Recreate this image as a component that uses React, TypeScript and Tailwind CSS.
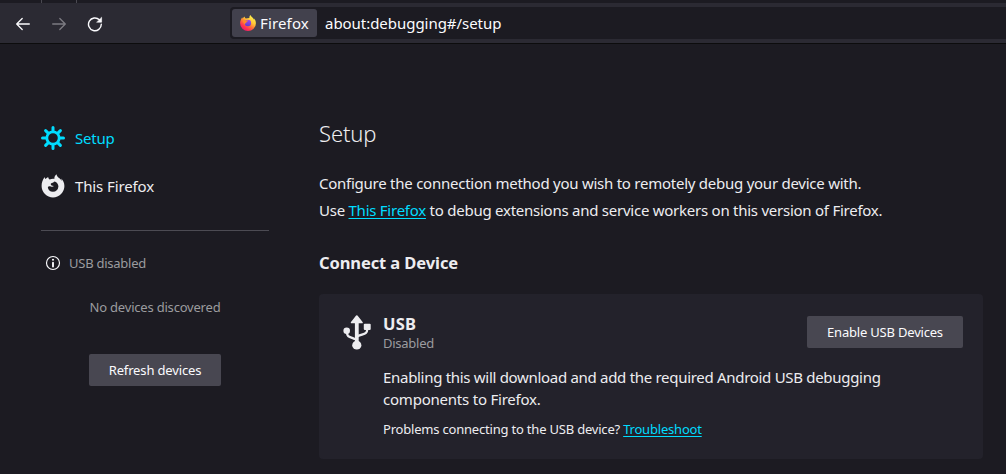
import React from "react";

const BackIcon = () => (
  <svg width="16" height="16" viewBox="0 0 16 16" fill="none" stroke="#fbfbfe" strokeWidth="1.3" strokeLinecap="round" strokeLinejoin="round">
    <path d="M14.3 8H1.8M7.2 2.5 1.7 8l5.5 5.5" />
  </svg>
);

const ForwardIcon = () => (
  <svg width="16" height="16" viewBox="0 0 16 16" fill="none" stroke="#7c7b82" strokeWidth="1.3" strokeLinecap="round" strokeLinejoin="round">
    <path d="M1.7 8h12.5M8.8 2.5 14.3 8l-5.5 5.5" />
  </svg>
);

const ReloadIcon = () => (
  <svg width="16" height="16" viewBox="0 0 16 16" fill="none" stroke="#fbfbfe" strokeWidth="1.4" strokeLinecap="round">
    <path d="M14.3 8.3A6.4 6.4 0 1 1 12.4 3.8" />
    <path d="M14.6 1.6v4.6H10z" fill="#fbfbfe" strokeWidth=".6" strokeLinejoin="round" />
  </svg>
);

const FirefoxLogo = () => (
  <svg width="16" height="16" viewBox="0 0 16 16">
    <defs>
      <linearGradient id="flame" x1="0.85" y1="0.1" x2="0.25" y2="0.95">
        <stop offset="0" stopColor="#fff44f" />
        <stop offset="0.35" stopColor="#ffc636" />
        <stop offset="0.6" stopColor="#ff7139" />
        <stop offset="0.8" stopColor="#ff3750" />
        <stop offset="1" stopColor="#f5156c" />
      </linearGradient>
      <linearGradient id="globe" x1="0.6" y1="0" x2="0.4" y2="1">
        <stop offset="0" stopColor="#a347ec" />
        <stop offset="1" stopColor="#5b3fd0" />
      </linearGradient>
    </defs>
    <path fill="url(#flame)" d="M10.400.1c-.9.8-1.100 2-1 2.900L5.800 3.400C4.900 3 4.600 2.300 4.700 1.600c-1 .5-1.600 1.200-2 1.900-.4-.2-.5-.8-.5-1.200C.9 4.200.1 6.200.1 8.300A7.900 7.700 0 0 0 8 16a7.900 7.700 0 0 0 7.900-7.700c0-2.200-.8-4-2-4.900.2.500.3 1 .3 1.500C13.400 2.700 11 2.200 10.400.1z" />
    <circle cx="7.900" cy="8" r="3.200" fill="url(#globe)" />
    <path fill="#ff8a2b" d="M2.500 5.200c1.400-.8 2.700-.5 3.600.2l2.100.2c-.1.700-.8 1-1.600 1.400-.4.200-.5.900-.2 1.400-1.200-.2-2.100.4-1.900 1.500z" />
  </svg>
);

const FirefoxGlyph = () => (
  <svg width="24" height="24" viewBox="0 0 24 24" fill="#ededf0">
    <path
      fillRule="evenodd"
      d="M15.500.3c-1.500 1.200-2.200 2.900-2.200 4.600-1.700-.2-3.200 0-4.600.5C7.600 4.800 7.200 3.900 7.200 3 6.100 3.500 5.100 4.300 4.500 5.100 3.900 4.600 3.700 3.800 3.700 3 1.700 5.400.6 8.700.6 12A11.400 11.400 0 0 0 12 23.400 11.400 11.400 0 0 0 23.400 12c0-3-1.300-6.100-3.300-7.600.4.900.6 1.900.5 2.500C19.200 3.900 15.900 3.600 15.500.3zM13.700 7.500c2.300.8 3.700 2.800 3.700 5.100a5.400 5.400 0 0 1-5.400 5.200 5.200 5.200 0 0 1-5.200-4.700c.7-1.100 1.900-1.200 3-.6 1.100.5 2.200.4 3.100-.4-1.900 0-3.200-.9-3.200-2 0-.6.400-.9 1.100-1.100.9-.3 1.800-.6 1.900-1.100z"
    />
  </svg>
);

const GearIcon = () => (
  <svg width="24" height="24" viewBox="0 0 24 24" fill="none" stroke="#00ddff">
    <circle cx="12" cy="12" r="6.200" strokeWidth="2.800" />
    <path strokeWidth="3" strokeLinecap="round" d="M12 1.500v3.300M12 19.200v3.300M1.500 12h3.300M19.200 12h3.300M4.600 4.600l2.300 2.300M17.100 17.100l2.300 2.300M4.600 19.400l2.300-2.300M17.100 6.900l2.300-2.300" />
  </svg>
);

const InfoIcon = () => (
  <svg width="16" height="16" viewBox="0 0 16 16" fill="none">
    <circle cx="8" cy="8" r="6.500" stroke="#fbfbfe" strokeWidth="1.150" />
    <circle cx="8" cy="4.800" r="1.050" fill="#fbfbfe" />
    <path d="M8 7.600v3.900" stroke="#fbfbfe" strokeWidth="1.900" strokeLinecap="round" />
  </svg>
);

const UsbIcon = () => (
  <svg width="28" height="35" viewBox="0 0 28 36" preserveAspectRatio="none" fill="#ededf0">
    <path d="M13.800.3c.5 0 .8.2 1.100.7l4.700 6.200c.5.800.2 1.300-.7 1.300H8.700c-.9 0-1.200-.5-.7-1.300L12.700 1c.3-.5.600-.7 1.100-.7z" />
    <path d="M11.900 7h3.800v23h-3.800z" />
    <circle cx="13.800" cy="31" r="4.600" />
    <circle cx="3.700" cy="16.200" r="3.300" />
    <rect x="20.800" y="9" width="6.900" height="6.500" rx="1" />
    <path d="M4 18c0 4.500 2 4.300 8.800 7M24.200 15c0 4.600-3 4-9.600 6.700" fill="none" stroke="#ededf0" strokeWidth="2.300" />
  </svg>
);

const Link = ({ children }: { children: React.ReactNode }) => (
  <a href="#" className="text-[#00ddff] underline decoration-1 underline-offset-2 [text-decoration-skip-ink:none]">{children}</a>
);

function Toolbar() {
  return (
    <header>
      <div className="flex h-[3px] bg-[#1c1b22] pl-[41px]">
        <span className="w-[35px] border-l border-[#4a4951]" />
        <span className="border-l border-[#4a4951]" />
      </div>
      <div className="flex h-[41px] items-start border-b border-[#0c0c0d] bg-[#2b2a33] pt-1">
        <nav className="flex h-8 w-[230px] shrink-0 items-center gap-5 pt-[2px] pl-[15px]">
          <BackIcon />
          <ForwardIcon />
          <ReloadIcon />
        </nav>
        <div className="flex h-8 grow items-center rounded-l bg-[#1c1b22] pl-[2px] text-[#fbfbfe]">
          <div className="flex h-7 w-[85px] items-center rounded-[3px] bg-[#42414d] pl-2">
            <FirefoxLogo />
            <span className="ml-1 text-[15px] tracking-[0.15px]">Firefox</span>
          </div>
          <span className="ml-2 text-[15px] tracking-[-0.04px]">about:debugging#/setup</span>
        </div>
      </div>
    </header>
  );
}

function Sidebar() {
  return (
    <aside className="w-[228px] shrink-0 pt-[70px]">
      <div className="flex h-12 items-center gap-[10px] text-[15px] tracking-[-0.2px] text-[#00ddff]">
        <GearIcon />
        <span>Setup</span>
      </div>
      <div className="flex h-12 items-center gap-[10px] text-[15px] tracking-[-0.12px]">
        <FirefoxGlyph />
        <span>This Firefox</span>
      </div>
      <hr className="mt-5 border-[#4c4b53]" />
      <div className="mt-5 flex h-6 items-center gap-2 pl-1 text-[13px] tracking-[-0.25px] text-[#9b9b9f]">
        <InfoIcon />
        <span className="pt-px">USB disabled</span>
      </div>
      <p className="mt-5 text-center text-[13px] leading-6 tracking-[-0.2px] text-[#9b9b9f]">No devices discovered</p>
      <button className="mx-auto mt-[35px] block h-8 w-[132px] rounded-[2px] bg-[#484751] pt-px text-[13px] tracking-[-0.15px] text-[#fbfbfe]">Refresh devices</button>
    </aside>
  );
}

function UsbCard() {
  return (
    <section className="mt-[19px] flex h-[165px] w-[664px] rounded bg-[#23222b] pl-6">
      <div className="w-10 pt-[21px]">
        <UsbIcon />
      </div>
      <div className="grow">
        <div className="flex justify-between pr-5">
          <div className="pt-5">
            <h3 className="text-[16.5px] leading-5 font-bold tracking-[0.2px]">USB</h3>
            <p className="text-[13px] leading-[18px] tracking-[-0.25px] text-[#9b9b9f]">Disabled</p>
          </div>
          <button className="mt-[22px] h-8 w-[156px] rounded-[2px] bg-[#484751] pt-px text-[13px] tracking-[-0.2px] text-[#fbfbfe]">Enable USB Devices</button>
        </div>
        <p className="mt-[14px] w-[530px] text-[15px] leading-[22px] tracking-[-0.3px]">
          Enabling this will download and add the required Android USB debugging<br />
          <span className="tracking-[-0.22px]">components to Firefox.</span>
        </p>
        <p className="mt-[9px] text-[13px] leading-5 tracking-[-0.2px]">
          Problems connecting to the USB device? <Link>Troubleshoot</Link>
        </p>
      </div>
    </section>
  );
}

export default function App() {
  return (
    <div className="h-[474px] w-[1006px] overflow-hidden bg-[#1c1b22] font-['Noto_Sans',sans-serif] whitespace-nowrap text-[#ededf0]">
      <Toolbar />
      <div className="flex gap-[50px] pl-[41px]">
        <Sidebar />
        <main className="pt-[73px]">
          <h1 className="text-[22px] leading-8 font-light tracking-[-0.1px]">Setup</h1>
          <p className="mt-[21px] text-[15px] leading-[27px] tracking-[-0.25px]">
            Configure the connection method you wish to remotely debug your device with.<br />
            Use <Link>This Firefox</Link> to debug extensions and service workers on this version of Firefox.
          </p>
          <h2 className="mt-[27px] text-[16.5px] leading-6 font-bold tracking-[-0.1px]">Connect a Device</h2>
          <UsbCard />
        </main>
      </div>
    </div>
  );
}
